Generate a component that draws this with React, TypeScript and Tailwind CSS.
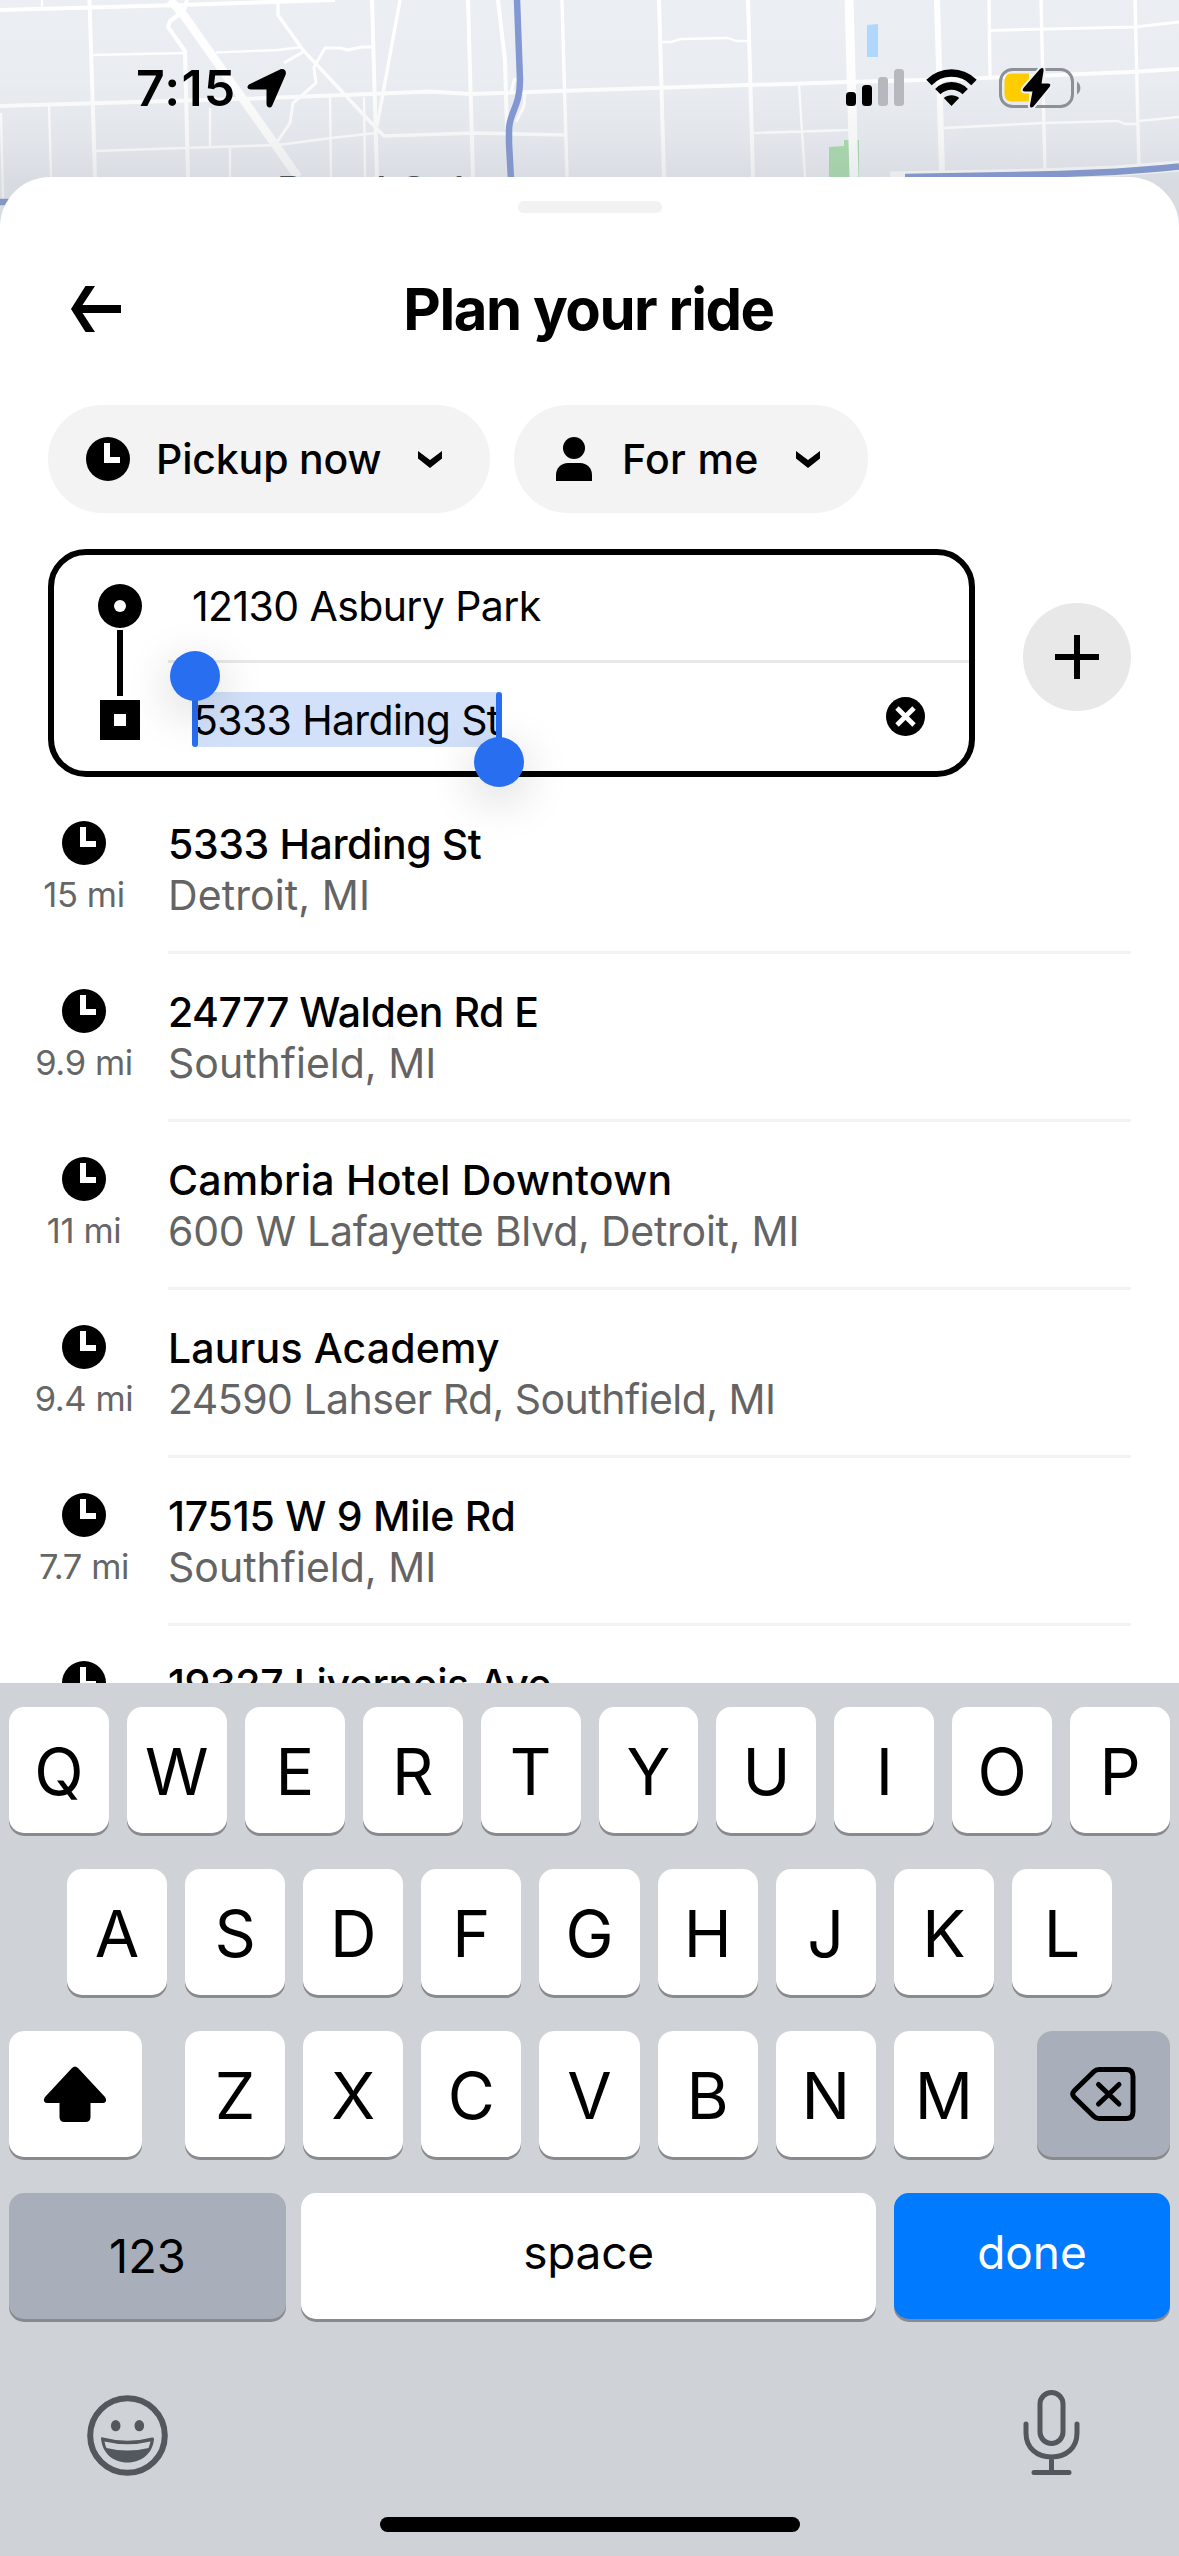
import React from 'react'

interface Place {
    name: string
    address?: string
    distance?: string
    nameStyle: string
    addressStyle?: string
}

const places: Array<Place> = [
    { name: '5333 Harding St', address: 'Detroit, MI', distance: '15 mi', nameStyle: 'tracking-[-0.400px]', addressStyle: 'tracking-[0.100px]' },
    { name: '24777 Walden Rd E', address: 'Southfield, MI', distance: '9.9 mi', nameStyle: 'tracking-[-0.500px]', addressStyle: 'tracking-[0px]' },
    { name: 'Cambria Hotel Downtown', address: '600 W Lafayette Blvd, Detroit, MI', distance: '11 mi', nameStyle: 'tracking-[0.250px]', addressStyle: 'tracking-[-0.250px]' },
    { name: 'Laurus Academy', address: '24590 Lahser Rd, Southfield, MI', distance: '9.4 mi', nameStyle: 'tracking-[0.150px]', addressStyle: 'tracking-[-0.530px]' },
    { name: '17515 W 9 Mile Rd', address: 'Southfield, MI', distance: '7.7 mi', nameStyle: 'tracking-[-0.250px]', addressStyle: 'tracking-[0px]' },
    { name: '19327 Livernois Ave', nameStyle: 'tracking-[-0.400px]' },
]

const MapBackground = () => (
    <svg className="absolute left-0 top-0" width="1179" height="230" viewBox="0 0 1179 230" fill="none">
        <defs>
            <linearGradient id="shade" x1="0" y1="0" x2="0" y2="1">
                <stop offset="0" stopColor="#8a8f98" stopOpacity="0" />
                <stop offset="0.35" stopColor="#8a8f98" stopOpacity="0.02" />
                <stop offset="0.6" stopColor="#8a8f98" stopOpacity="0.09" />
                <stop offset="0.8" stopColor="#8a8f98" stopOpacity="0.2" />
            </linearGradient>
        </defs>
        <rect width="1179" height="230" fill="#ebeef3" />
        <path d="M867 25L878 24V57H867Z" fill="#b0d8ff" />
        <path d="M829 147L844 146V140H859V177H829Z" fill="#abdcae" />
        <g stroke="#fff" strokeLinejoin="round">
            <path strokeWidth="4" d="M0 10L180 5L335 0M89.5 0L95 177M187 0L184 11L170 21L168 27L185 51L188 177M372 0L377 177M468 0L473 177M498 0L505 60L507 130M659 0L664 177M748 0L753 177" />
            <path strokeWidth="8.5" d="M170 0L185 17L298 177" />
            <path strokeWidth="4" d="M0 106L240 99L370 94L430 91.5L470 94L589 90L848 82L960 79L1130 72L1179 69" />
            <path strokeWidth="3.4" d="M278 3V15L303 50L376 128L384 136L475 133L564 135M400 0L377 126M562 0L567 177M989 0L990 77M1041 0L1045 172M1135 0L1139 170" />
            <path strokeWidth="3" d="M303 52L284 63M372 47L362 47L348 50L340 48H325L314 67L316 83L293 103L290 123L275 145M990 30.5L1135 27L1179 22" />
            <path strokeWidth="2.4" d="M42 0V8M92 55L186 53M216 52.5L278 50L302 47M96 151L184 148L278 145L331 138L376 133M1 113L3 200M49 105L51 177M210 108V148M230 148V177M330 97L331 177M364 97L365 177M660 42H671L681 39L728 38L736 41H748M799 85L805 177M753 133L849 130M944 128L1044 123L1118 121L1125 124H1139M1139 121L1179 117" />
            <path strokeWidth="9" d="M849 0L854 177" />
            <path strokeWidth="6" d="M937 0L942 172" />
            <path strokeWidth="3" d="M515 78L511 92M525 92L524 106L516 122" />
            <path strokeWidth="11" d="M890 177L1040 174L1116 171L1179 166" />
        </g>
        <path strokeWidth="6.5" stroke="#8298d4" strokeLinejoin="round" d="M517 0L520 80C520 108 509 112 509 130V143L511 180M905 177L1040 174.5C1090 173.5 1130 172 1179 166.5M0 202H12" />
        <rect width="1179" height="230" fill="url(#shade)" />
        <text x="277" y="206.500" fill="#4b4f57" fontSize="42" fontWeight="500" fontFamily="Inter, sans-serif">Royal Oak</text>
    </svg>
)

const StatusBar = () => (
    <div className="relative flex h-[177px] shrink-0 items-start justify-between pl-[136px] pr-[97px] pt-[58px]">
        <div className="flex items-center">
            <span className="w-[108px] whitespace-nowrap text-[50px] font-semibold leading-[60px] tracking-[1.200px]">7:15</span>
            <svg className="ml-[2px]" width="42" height="42" viewBox="0 0 42 42">
                <path d="M4 17L34 2.5C38 1 41 4 39.500 8L26.500 38C25 42 20.500 41 20.500 37V22.500H5C0.500 22.500 0.500 18.500 4 17Z" fill="#000" />
            </svg>
        </div>
        <div className="flex items-start pt-[9px]">
            <svg width="58" height="40" viewBox="0 0 58 40">
                <rect x="0" y="25" width="10" height="14" rx="3.500" />
                <rect x="16" y="18" width="10" height="21" rx="3.500" />
                <rect x="32" y="10" width="10" height="29" rx="3.500" fill="#b6b8bd" />
                <rect x="48" y="2" width="10" height="37" rx="3.500" fill="#b6b8bd" />
            </svg>
            <svg className="ml-[22px]" width="51" height="40" viewBox="0 0 51 40">
                <g fill="none" stroke="#000" strokeWidth="7.600">
                    <path d="M3 15.500C15.500 2.900 35.500 2.900 48 15.500" />
                    <path d="M11.800 24.600C19.500 17 31.500 17 39.200 24.600" />
                </g>
                <path d="M17.800 31C22 27.300 29 27.300 33.200 31L25.500 39Z" />
            </svg>
            <svg className="ml-[21px]" width="84" height="42" viewBox="0 0 84 42">
                <rect x="2.500" y="2.500" width="72" height="37" rx="12" fill="none" stroke="#8d9096" strokeWidth="3" />
                <path d="M79 14.500C83.500 17 83.500 25 79 27.500Z" fill="#8d9096" />
                <path d="M15 6.500H31V34.500H15C9 34.500 6.500 32 6.500 26V15C6.500 9 9 6.500 15 6.500Z" fill="#fc0" />
                <path d="M42 2C44.500 0 46 1 45.500 4L43.500 16.500H50C52.500 16.500 53 18 51.500 20L35.500 39.500C33.500 41.500 31.500 40.500 32 38L34.500 24.500H27C24.500 24.500 24 23 25.500 21Z" stroke="#eef0f3" strokeWidth="4" paintOrder="stroke" />
            </svg>
        </div>
    </div>
)

const ClockIcon = () => (
    <svg className="shrink-0" width="44" height="44" viewBox="0 0 44 44">
        <circle cx="22" cy="22" r="22" />
        <path d="M18 6H24V20H34V26H18Z" fill="#fff" />
    </svg>
)

const PersonIcon = () => (
    <svg className="shrink-0" width="44" height="44" viewBox="0 0 44 44">
        <circle cx="22" cy="11" r="11" />
        <path d="M4 44V38C4 31 9 26 16 26H28C35 26 40 31 40 38V44Z" />
    </svg>
)

const ChevronIcon = () => (
    <svg className="shrink-0" width="24" height="17" viewBox="0 0 24 17">
        <path d="M0 0L12 9L24 0V7.500L12 17L0 7.500Z" />
    </svg>
)

const PlaceRow = ({ place }: { place: Place }) => (
    <div className="flex h-[168px] shrink-0">
        <div className="flex w-[168px] flex-col items-center pt-[35px]">
            <ClockIcon />
            {place.distance && (
                <span className="whitespace-nowrap text-[34.500px] leading-[59px] tracking-[-0.400px] text-[#666]">{place.distance}</span>
            )}
        </div>
        <div className="mr-12 flex-1 whitespace-nowrap border-b-[3px] border-[#f3f3f3] pt-8 text-[41px]">
            <div className={`font-medium leading-[52px] ${place.nameStyle}`}>{place.name}</div>
            {place.address && (
                <div className={`leading-[51px] text-[#646464] ${place.addressStyle}`}>{place.address}</div>
            )}
        </div>
    </div>
)

const Key = ({ children, className = 'flex-1 bg-white' }: { children: React.ReactNode; className?: string }) => (
    <div className={`flex h-[126px] items-center justify-center rounded-[15px] shadow-[0_3px_0_#898a8d] ${className}`}>{children}</div>
)

const LetterRow = ({ letters }: { letters: string }) => (
    <>
        {letters.split('').map((letter) => (
            <Key key={letter}>
                <span className="pt-[3px] text-[64.500px] leading-[78px]">{letter}</span>
            </Key>
        ))}
    </>
)

const Keyboard = () => (
    <div className="flex h-[873px] shrink-0 flex-col bg-[#cfd2d7] pt-6">
        <div className="flex flex-col gap-9 px-[9px]">
            <div className="flex gap-[18px]">
                <LetterRow letters="QWERTYUIOP" />
            </div>
            <div className="flex gap-[18px] px-[58px]">
                <LetterRow letters="ASDFGHJKL" />
            </div>
            <div className="flex justify-between">
                <Key className="w-[133px] bg-white pr-[2px]">
                    <svg width="64" height="56" viewBox="0 0 64 56">
                        <path d="M29 2Q32 -1 35 2L62 31Q65 36 60 37H47.500V51Q47.500 56 42.500 56H21.500Q16.500 56 16.500 51V37H4Q-1 36 2 31Z" />
                    </svg>
                </Key>
                <div className="flex w-[809px] gap-[18px]">
                    <LetterRow letters="ZXCVBNM" />
                </div>
                <Key className="w-[133px] bg-[#a9afba] pr-[2px]">
                    <svg width="66" height="54" viewBox="0 0 66 54" fill="none" stroke="#000" strokeWidth="5" strokeLinecap="round" strokeLinejoin="round">
                        <path d="M29 2.500H56Q63 2.500 63 9.500V44.500Q63 51.500 56 51.500H29Q26 51.500 24 49.500L4 30Q1.500 27 4 24L24 4.500Q26 2.500 29 2.500Z" />
                        <path d="M28.500 17.500L49 37M49 17.500L28.500 37" />
                    </svg>
                </Key>
            </div>
            <div className="flex text-[46px] leading-[56px]">
                <Key className="w-[277px] bg-[#a9afba]">
                    <span className="text-[47px]">123</span>
                </Key>
                <Key className="ml-[15px] w-[575px] bg-white">
                    <span className="pb-2 tracking-[-0.300px]">space</span>
                </Key>
                <Key className="ml-[18px] w-[276px] bg-[#007aff] text-white">
                    <span className="pb-2">done</span>
                </Key>
            </div>
        </div>
        <div className="flex flex-1 items-start justify-between pl-[87px] pr-[99px] pt-[71px]">
            <svg className="mt-[5px]" width="81" height="81" viewBox="0 0 81 81">
                <circle cx="40.500" cy="40.500" r="37.300" fill="none" stroke="#52585d" strokeWidth="6" />
                <g fill="#52585d">
                    <ellipse cx="28.700" cy="30.700" rx="4.800" ry="5.600" />
                    <ellipse cx="52.300" cy="30.700" rx="4.800" ry="5.600" />
                    <path d="M14 43Q14 42 16 42.500Q40.500 49 65 42.500Q67 42 67 44C66 58 55 67.500 40.500 67.500S15 58 14 43Z" />
                </g>
                <path d="M17.500 46.500Q40.500 52 63.500 46.500Q63 49 61.500 53Q40.500 58 19.500 53Q18 50 17.500 46.500Z" fill="#cfd2d7" />
            </svg>
            <svg width="57" height="86" viewBox="0 0 57 86" fill="none" stroke="#52585d" strokeWidth="5" strokeLinecap="round">
                <rect x="17" y="2.500" width="23" height="51" rx="11.500" />
                <path d="M3 34V43C3 58 14 67 28.500 67S54 58 54 43V34M28.500 67V82M11 82.500H46" />
            </svg>
        </div>
        <div className="mb-6 h-[15px] w-[420px] self-center rounded-full bg-black" />
    </div>
)

const App: React.FC = () => {
    return (
        <div className="relative flex h-[2556px] w-[1179px] flex-col overflow-hidden bg-white font-['Inter',sans-serif] text-black">
            <MapBackground />
            <StatusBar />

            {/* Bottom sheet */}
            <div className="relative flex min-h-0 flex-1 flex-col overflow-hidden rounded-t-[50px] bg-white">
                <div className="mt-6 h-3 w-[144px] shrink-0 self-center rounded-full bg-[#f2f2f2]" />

                {/* Header */}
                <div className="mt-[66px] flex h-[60px] shrink-0 items-center px-[71px]">
                    <svg width="50" height="46" viewBox="0 0 50 46">
                        <path d="M14.500 0H24L11.500 19H50V27H11.500L24 46H14.500L0 23Z" />
                    </svg>
                    <h1 className="flex-1 whitespace-nowrap pr-[52px] text-center text-[58px] font-bold leading-[60px] tracking-[-1.450px]">Plan your ride</h1>
                </div>

                {/* Filters */}
                <div className="mt-[66px] flex h-[108px] shrink-0 gap-6 pl-12 text-[41px] font-medium">
                    <div className="flex w-[442px] items-center rounded-full bg-[#f3f3f3] pl-[38px] pr-12">
                        <ClockIcon />
                        <span className="ml-[26px] flex-1 whitespace-nowrap pt-[2px] tracking-[-0.150px]">Pickup now</span>
                        <ChevronIcon />
                    </div>
                    <div className="flex w-[354px] items-center rounded-full bg-[#f3f3f3] pl-[38px] pr-12">
                        <PersonIcon />
                        <span className="ml-[26px] flex-1 whitespace-nowrap pt-[2px] tracking-[0.300px]">For me</span>
                        <ChevronIcon />
                    </div>
                </div>

                {/* Pickup and destination */}
                <div className="relative z-10 mt-9 flex h-[228px] shrink-0 items-center justify-between px-12">
                    <div className="flex h-[228px] w-[927px] rounded-[38px] border-[6px] border-black text-[41px]">
                        <div className="flex w-[114px] flex-col items-center pl-[18px] pt-[29px]">
                            <div className="flex h-11 w-11 shrink-0 items-center justify-center rounded-full bg-black">
                                <div className="h-3 w-3 rounded-full bg-white" />
                            </div>
                            <div className="mt-[2px] h-[66px] w-[6px] shrink-0 bg-black" />
                            <div className="mt-1 flex h-10 w-10 shrink-0 items-center justify-center bg-black">
                                <div className="h-3 w-3 bg-white" />
                            </div>
                        </div>
                        <div className="flex flex-1 flex-col">
                            <div className="flex h-[105px] items-center whitespace-nowrap pb-px pl-6 tracking-[-0.600px]">12130 Asbury Park</div>
                            <div className="h-[3px] bg-[#e8e8e8]" />
                            <div className="flex h-[108px] items-center justify-between pl-[27px] pr-[44px] pt-[5px]">
                                <div className="relative h-[55px] w-[304px] whitespace-nowrap bg-[#d2e1f9] leading-[56px]">
                                    <span className="relative -left-[2px] tracking-[-0.650px]">5333 Harding St</span>
                                    {/* Selection handles */}
                                    <div className="absolute -left-[3px] bottom-0 top-0 w-[6px] rounded-full bg-[#276ef1]" />
                                    <div className="absolute -left-[25px] -top-[41px] h-[50px] w-[50px] rounded-full bg-[#276ef1] shadow-[0_12px_48px_rgba(0,0,0,0.18)]" />
                                    <div className="absolute -right-[3px] bottom-0 top-0 w-[6px] rounded-full bg-[#276ef1]" />
                                    <div className="absolute -bottom-[40px] -right-[25px] h-[50px] w-[50px] rounded-full bg-[#276ef1] shadow-[0_12px_48px_rgba(0,0,0,0.18)]" />
                                </div>
                                <svg className="-mt-[6px]" width="39" height="39" viewBox="0 0 39 39">
                                    <circle cx="19.500" cy="19.500" r="19.500" />
                                    <path d="M11 11L28 28M28 11L11 28" stroke="#fff" strokeWidth="4.800" />
                                </svg>
                            </div>
                        </div>
                    </div>
                    <div className="mb-[12px] flex h-[108px] w-[108px] items-center justify-center rounded-full bg-[#e8e8e8]">
                        <svg width="44" height="44" viewBox="0 0 44 44">
                            <path d="M22 0V44M0 22H44" stroke="#000" strokeWidth="6" />
                        </svg>
                    </div>
                </div>

                {/* Recent places */}
                <div className="mt-[9px] flex min-h-0 flex-1 flex-col overflow-hidden">
                    {places.map((place, index) => (
                        <PlaceRow key={index} place={place} />
                    ))}
                </div>
            </div>

            <Keyboard />
        </div>
    )
}

export default App
